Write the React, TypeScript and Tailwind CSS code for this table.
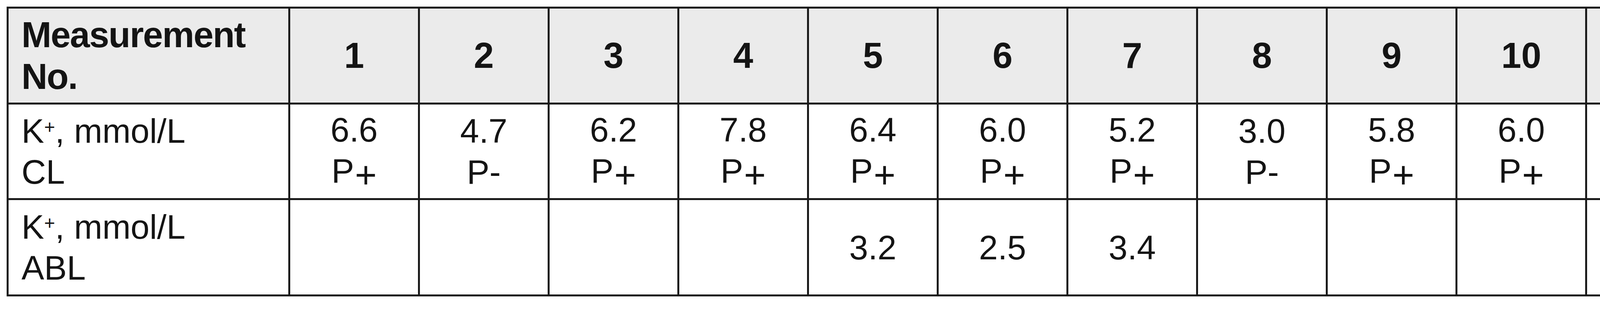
import React from "react";

const cl: { v: string; p: "+" | "-" }[] = [
  { v: "6.6", p: "+" },
  { v: "4.7", p: "-" },
  { v: "6.2", p: "+" },
  { v: "7.8", p: "+" },
  { v: "6.4", p: "+" },
  { v: "6.0", p: "+" },
  { v: "5.2", p: "+" },
  { v: "3.0", p: "-" },
  { v: "5.8", p: "+" },
  { v: "6.0", p: "+" },
  { v: "3.7", p: "-" },
  { v: "4.2", p: "-" },
];

const abl: string[] = ["", "", "", "", "3.2", "2.5", "3.4", "", "", "", "", ""];

const cell = "border-r-[5px] border-b-[5px] border-[#1a1a1a] flex items-center";

function KLabel({ sub }: { sub: string }) {
  return (
    <div className="flex flex-col text-[87px] leading-[105px]">
      <span>
        K
        <span className="text-[48px] leading-none align-[24px]">+</span>, mmol/L
      </span>
      <span>{sub}</span>
    </div>
  );
}

export default function App() {
  return (
    <div
      className="w-[4750px] h-[800px] bg-white pt-[17px] pl-[17px] text-[#141414]"
      style={{ fontFamily: '"Liberation Sans", Arial, Helvetica, sans-serif' }}
    >
      <div className="grid w-fit grid-cols-[721px_repeat(12,332px)] grid-rows-[246px_245px_247px] border-l-[5px] border-t-[5px] border-[#1a1a1a]">
        {/* Header row */}
        <div className={`${cell} bg-[#ebebeb] pl-[33px]`}>
          <div className="text-[92px] leading-[107px] font-bold tracking-[-0.02em]">
            Measurement
            <br />
            No.
          </div>
        </div>
        {Array.from({ length: 12 }, (_, i) => (
          <div key={`h${i}`} className={`${cell} bg-[#ebebeb] justify-center`}>
            <span className="text-[92px] leading-[107px] font-bold">{i + 1}</span>
          </div>
        ))}

        {/* CL row */}
        <div className={`${cell} pl-[33px]`}>
          <KLabel sub="CL" />
        </div>
        {cl.map((c, i) => (
          <div key={`c${i}`} className={`${cell} justify-center`}>
            <div className="flex flex-col items-center text-[87px] leading-[105px]">
              <span>{c.v}</span>
              <span>
                P
                {c.p === "+" ? (
                  <span className="text-[96px] leading-none align-[-14px] ml-[2px]">+</span>
                ) : (
                  <span>-</span>
                )}
              </span>
            </div>
          </div>
        ))}

        {/* ABL row */}
        <div className={`${cell} pl-[33px]`}>
          <KLabel sub="ABL" />
        </div>
        {abl.map((v, i) => (
          <div key={`a${i}`} className={`${cell} justify-center`}>
            <span className="text-[87px] leading-[105px]">{v}</span>
          </div>
        ))}
      </div>
    </div>
  );
}
